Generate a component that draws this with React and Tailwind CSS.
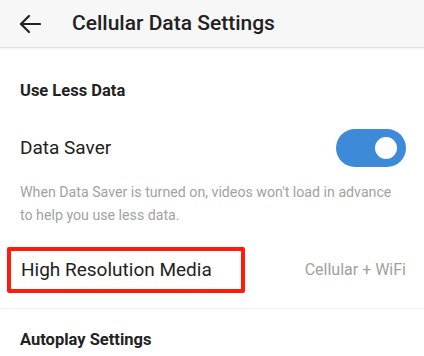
import React from 'react';

function BackArrow() {
  return (
    <svg width="22" height="20" viewBox="0 0 22 20" fill="none" stroke="#222" strokeWidth="2.2" strokeLinecap="round" strokeLinejoin="round">
      <path d="M2 10 H21" />
      <path d="M10 2 L2 10 L10 18" />
    </svg>
  );
}

function Toggle() {
  return (
    <div className="w-[70px] h-[38px] rounded-full bg-[#3d8ad8] flex items-center justify-end pr-[9px]">
      <div className="w-[22px] h-[22px] rounded-full bg-white" />
    </div>
  );
}

export default function App() {
  return (
    <div className="w-[424px] h-[356px] bg-white overflow-hidden font-['Roboto',sans-serif] text-[#222]">
      {/* Top bar */}
      <div className="h-[48px] bg-[#f7f7f7] border-b border-[#e2e2e2] shadow-[0_1px_2px_rgba(0,0,0,0.06)] flex items-center pl-[19px]">
        <BackArrow />
        <h1 className="ml-[31px] text-[21px] font-medium text-[#222]">Cellular Data Settings</h1>
      </div>

      <div className="px-5">
        <div className="pt-[33px] text-[16.5px] font-bold leading-[20px]">Use Less Data</div>

        <div className="mt-[28px] flex items-center justify-between">
          <span className="text-[19px] leading-[24px]">Data Saver</span>
          <div className="-mr-[2px]"><Toggle /></div>
        </div>

        <p className="mt-[14px] w-[378px] text-[14.2px] leading-[23px] text-[#a2a2a2]">
          When Data Saver is turned on, videos won't load in advance to help you use less data.
        </p>

        <div className="mt-[20px] flex items-center justify-between">
          <span className="-ml-[13px] h-[46px] w-[238px] flex items-center pl-[10px] border-[4px] border-[#ff1a0a] rounded-[2px] text-[19px]">
            High Resolution Media
          </span>
          <span className="text-[16px] text-[#a0a0a0] -mr-[2px]">Cellular + WiFi</span>
        </div>
      </div>

      <div className="mt-[15px] border-t border-[#eeeeee]" />

      <div className="px-5 pt-[21px] text-[16.5px] font-bold leading-[20px]">Autoplay Settings</div>
    </div>
  );
}
